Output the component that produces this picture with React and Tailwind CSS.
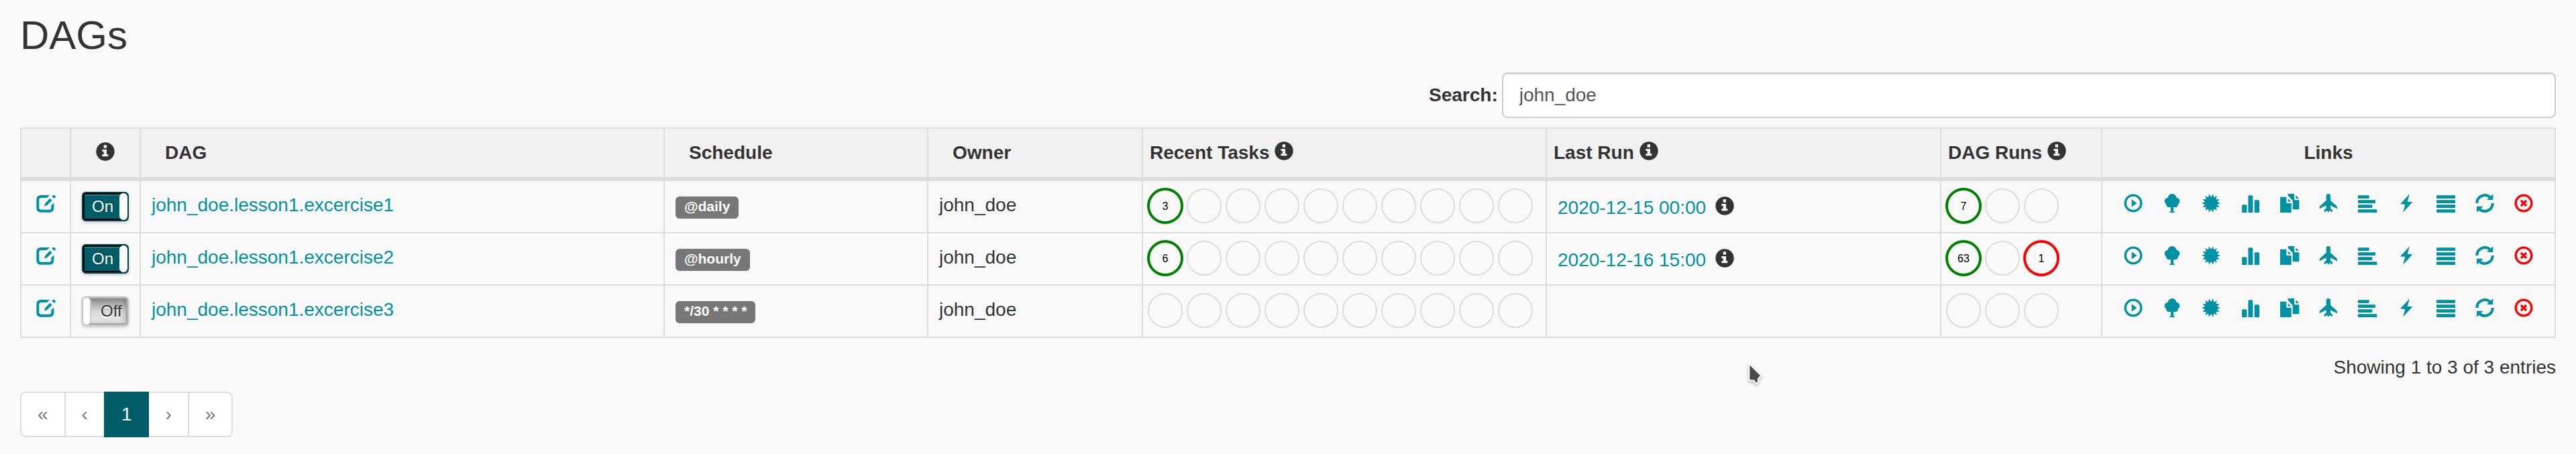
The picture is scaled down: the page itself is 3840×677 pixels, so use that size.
import React, { useState } from "react";

function Icon({ children, className = "" }) {
  return (
    <svg viewBox="0 0 84 84" fill="currentColor" aria-hidden="true" className={`size-7 shrink-0 overflow-visible ${className}`}>
      {children}
    </svg>
  );
}

const InfoIcon = ({ className }) => (
  <Icon className={className}>
    <path
      fillRule="evenodd"
      d="M42 1a41 41 0 1 0 0 82a41 41 0 1 0 0-82zM35 13H48V26H35zM28 33H48V55H55V64H28V55H35V42H28z"
    />
  </Icon>
);

const EditIcon = () => (
  <Icon>
    <path d="M60 6H21Q1 6 1 26V63Q1 83 21 83H59Q79 83 79 63V40L67 52V62Q67 71 58 71H22Q13 71 13 62V27Q13 18 22 18H48z" />
    <path d="M36 56L40 43L61 20L71 29L49 51zM70 11L75 6Q78 4 81 6L86 11Q88 14 86 16L81 21z" />
  </Icon>
);

const ring = <circle cx="42" cy="42" r="35.5" fill="none" stroke="currentColor" strokeWidth="10" />;

function starPoints(count, outer, inner) {
  const pts = [];
  for (let i = 0; i < count * 2; i++) {
    const r = i % 2 ? outer : inner;
    const a = (Math.PI * i) / count - Math.PI / 2;
    pts.push(`${(42 + r * Math.cos(a)).toFixed(1)},${(42 + r * Math.sin(a)).toFixed(1)}`);
  }
  return pts.join(" ");
}

const LINKS = [
  ["Trigger Dag", <>{ring}<path d="M35 25L58 42L35 59z" /></>],
  [
    "Tree View",
    <>
      <circle cx="42" cy="20" r="20" />
      <circle cx="23" cy="33" r="15" />
      <circle cx="61" cy="33" r="15" />
      <circle cx="29" cy="47" r="14" />
      <circle cx="55" cy="47" r="14" />
      <path d="M30 30H54V58H30zM36 50H48V79H53V84H31V79H36z" />
    </>,
  ],
  ["Graph View", <polygon points={starPoints(14, 42, 28)} />],
  [
    "Tasks Duration",
    <path d="M3 84V54Q3 49 8 49H20Q25 49 25 54V84zM31 84V12Q31 7 36 7H47Q52 7 52 12V84zM59 84V33Q59 28 64 28H76Q81 28 81 33V84z" />,
  ],
  [
    "Task Tries",
    <path d="M0 14H28V42H50V84H0zM35 22L49 35H35zM35 0H63V28H85V70H56V31L35 8zM70 7L84 21H70z" />,
  ],
  [
    "Landing Times",
    <path d="M42 0Q51 0 51 10V30L79 55Q82 58 81 67L51 52V64L60 73Q62 77 59 82L49 76H47L42 83L36 76H34L24 82Q21 77 23 73L32 64V52L2 67Q1 58 4 55L32 30V10Q32 0 42 0z" />,
  ],
  [
    "Gantt View",
    <>
      <rect y="7" width="50" height="14" rx="2" />
      <rect y="28" width="78" height="14" rx="2" />
      <rect y="49" width="64" height="14" rx="2" />
      <rect y="70" width="85" height="14" rx="2" />
    </>,
  ],
  ["Code View", <path d="M57 1L15 46L37 48L27 83L70 37L47 35z" />],
  [
    "Logs",
    <>
      <rect y="7" width="84" height="14" rx="2" />
      <rect y="28" width="84" height="14" rx="2" />
      <rect y="49" width="84" height="14" rx="2" />
      <rect y="70" width="84" height="14" rx="2" />
    </>,
  ],
  [
    "Refresh",
    <>
      <path d="M7 42A35 35 0 0 1 67 17M77 42A35 35 0 0 1 17 67" fill="none" stroke="currentColor" strokeWidth="12" />
      <path d="M79 1V27H51zM6 83V56H35z" />
    </>,
  ],
  ["Delete Dag", <>{ring}<path d="M30 30L54 54M54 30L30 54" stroke="currentColor" strokeWidth="10" /></>],
];

const DAGS = [
  { id: "john_doe.lesson1.excercise1", on: true, schedule: "@daily", tasks: [3], lastRun: "2020-12-15 00:00", runs: [7] },
  { id: "john_doe.lesson1.excercise2", on: true, schedule: "@hourly", tasks: [6], lastRun: "2020-12-16 15:00", runs: [63, null, 1] },
  { id: "john_doe.lesson1.excercise3", on: false, schedule: "*/30 * * * *", tasks: [], lastRun: null, runs: [] },
];

function Circles({ count, values }) {
  return (
    <div className="flex gap-1">
      {Array.from({ length: count }, (_, i) => {
        const v = values[i];
        const filled = v != null;
        const color = !filled ? "#dddddd" : i === 2 ? "#ff0000" : "#008000";
        return (
          <svg key={i} viewBox="0 0 54 54" className="size-[54px] shrink-0">
            <circle cx="27" cy="27" r="25" fill="none" stroke={color} strokeWidth={filled ? 4 : 2} />
            {filled && (
              <text x="27" y="33" textAnchor="middle" className="fill-black text-base">
                {v}
              </text>
            )}
          </svg>
        );
      })}
    </div>
  );
}

function Toggle({ name, initial }) {
  const [on, setOn] = useState(initial);
  return (
    <label
      className={`relative flex h-11 w-[70px] cursor-pointer overflow-hidden rounded-md border-2 text-2xl leading-10 shadow-[0_2px_4px_rgba(0,0,0,0.2)] ${
        on ? "border-[#00434a] bg-[#005c66] text-white" : "border-[#c4c4c4] bg-[#e6e6e6] text-[#333333]"
      }`}
    >
      <input type="checkbox" className="sr-only" checked={on} onChange={() => setOn(!on)} aria-label={`Toggle ${name}`} />
      {on ? (
        <>
          <span className="flex-1 border-y-2 border-l-2 border-black pl-[11px] leading-9 shadow-[inset_0_2px_0_#2b7880] [text-shadow:0_-1px_2px_rgba(0,0,0,0.4)]">
            On
          </span>
          <span className="-ml-1 w-3 rounded-md bg-white" />
        </>
      ) : (
        <>
          <span className="z-10 w-3 rounded-md border-r-2 border-[#cccccc] bg-white" />
          <span className="-ml-1 flex-1 border-y-2 border-r-2 border-[#a0a0a0] bg-linear-to-b from-[#909090] via-[#d8d8d8] via-50% to-[#e6e6e6] pl-[18px] leading-9 shadow-[inset_-4px_0_6px_rgba(0,0,0,0.15)] [text-shadow:0_2px_0_#ffffff]">
            Off
          </span>
        </>
      )}
    </label>
  );
}

const cell = "border-r-2 border-b-2 border-[#dddddd] align-top first:border-l-2";
const head = "border-t-2 border-r-2 border-b-6 border-[#dddddd] bg-[#f2f2f2] py-4 align-top font-bold first:border-l-2";

export default function App() {
  const [query, setQuery] = useState("john_doe");
  return (
    <main className="relative min-h-screen bg-[#fafafa] px-[30px] pt-5 pb-6 font-['Liberation_Sans',Arial,sans-serif] text-[28px] leading-10 text-[#333333]">
      <h2 className="mb-[22px] text-[60px] leading-[66px]">DAGs</h2>

      <div className="mb-3.5 ml-auto flex w-4/9 items-center gap-1.5">
        <label htmlFor="search" className="font-bold">
          Search:
        </label>
        <input
          id="search"
          type="search"
          value={query}
          onChange={(e) => setQuery(e.target.value)}
          className="h-[68px] min-w-0 flex-1 appearance-none rounded-lg border-2 border-[#cccccc] bg-white px-6 text-[#555555] shadow-[inset_0_2px_2px_rgba(0,0,0,0.075)] outline-none [&::-webkit-search-cancel-button]:hidden"
        />
      </div>

      <table className="w-full table-fixed border-separate border-spacing-0">
        <colgroup>
          <col className="w-[76px]" />
          <col className="w-[104px]" />
          <col />
          <col className="w-[393px]" />
          <col className="w-[320px]" />
          <col className="w-[602px]" />
          <col className="w-[588px]" />
          <col className="w-[240px]" />
          <col className="w-[676px]" />
        </colgroup>
        <thead>
          <tr>
            <th className={head} />
            <th className={head}>
              <div className="flex justify-center pt-1">
                <InfoIcon />
              </div>
            </th>
            {["DAG", "Schedule", "Owner"].map((t) => (
              <th key={t} className={`${head} pl-9 text-left`}>
                {t}
              </th>
            ))}
            {["Recent Tasks", "Last Run", "DAG Runs"].map((t) => (
              <th key={t} className={`${head} pl-2.5 text-left whitespace-nowrap`}>
                {t} <InfoIcon className="inline-block align-[-2px]" />
              </th>
            ))}
            <th className={`${head} text-center`}>Links</th>
          </tr>
        </thead>
        <tbody>
          {DAGS.map((d) => (
            <tr key={d.id} className="h-[78px] odd:bg-[#f9f9f9]">
              <td className={`${cell} pt-[19px]`}>
                <a href="#edit" aria-label={`Edit ${d.id}`} className="flex justify-center text-[#0092a2]">
                  <EditIcon />
                </a>
              </td>
              <td className={`${cell} px-4 pt-4`}>
                <Toggle name={d.id} initial={d.on} />
              </td>
              <td className={`${cell} px-4 pt-4`}>
                <a href="#dag" className="text-[#0092a2]">
                  {d.id}
                </a>
              </td>
              <td className={`${cell} px-4 pt-[23px]`}>
                <a
                  href="#schedule"
                  className="block w-fit rounded-md bg-[#777777] px-[13px] pt-1 pb-2 text-[21px] leading-[21px] font-bold whitespace-nowrap text-white"
                >
                  {d.schedule}
                </a>
              </td>
              <td className={`${cell} px-4 pt-4`}>john_doe</td>
              <td className={`${cell} pt-2.5 pl-1.5`}>
                <Circles count={10} values={d.tasks} />
              </td>
              <td className={`${cell} px-4 pt-5`}>
                {d.lastRun && (
                  <>
                    <a href="#run" className="mr-1.5 text-[#0092a2]">
                      {d.lastRun}
                    </a>{" "}
                    <InfoIcon className="inline-block align-[-2px]" />
                  </>
                )}
              </td>
              <td className={`${cell} pt-2.5 pl-1.5`}>
                <Circles count={3} values={d.runs} />
              </td>
              <td className={`${cell} px-8 pt-[19px]`}>
                <div className="flex justify-between">
                  {LINKS.map(([label, shape]) => (
                    <a key={label} href="#link" aria-label={label} className={label === "Delete Dag" ? "text-[#ff0000]" : "text-[#0092a2]"}>
                      <Icon>{shape}</Icon>
                    </a>
                  ))}
                </div>
              </td>
            </tr>
          ))}
        </tbody>
      </table>

      <p className="mt-6 mb-4 text-right">Showing 1 to 3 of 3 entries</p>

      <nav aria-label="Pages" className="flex">
        {["«", "‹", "1", "›", "»"].map((p) => (
          <button
            key={p}
            type="button"
            className={`-ml-0.5 h-[68px] border-2 px-6 first:ml-0 first:rounded-l-lg last:rounded-r-lg ${
              p === "1" ? "z-10 border-[#005c66] bg-[#005c66] text-white" : "border-[#dddddd] bg-white text-[#777777]"
            }`}
          >
            {p}
          </button>
        ))}
      </nav>

      <svg
        viewBox="0 0 60 96"
        aria-hidden="true"
        className="pointer-events-none absolute top-[542px] left-[2606px] h-8 w-5 overflow-visible drop-shadow-[0_2px_2px_rgba(0,0,0,0.3)]"
      >
        <path d="M4 0V76H24L36 90L44 86L45 68L58 54z" fill="#4a4a4a" stroke="#ffffff" strokeWidth="6" />
      </svg>
    </main>
  );
}
